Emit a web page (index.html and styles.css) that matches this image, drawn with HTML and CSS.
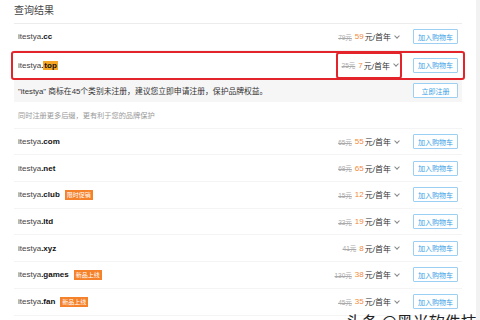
FILE: index.html
```html
<!DOCTYPE html>
<html lang="zh-CN">
  <head>
    <meta charset="UTF-8" />
    <title>查询结果</title>
    <link rel="stylesheet" href="styles.css">
  </head>
  <body>
    <div class="panel">
      <h3 class="title">查询结果</h3>

      <div class="row">
        <span class="domain">itestya<b>.cc</b></span>
        <span class="price"><s>79元</s> <em>59</em>元/首年 <i class="chev"></i></span>
        <button class="btn">加入购物车</button>
      </div>

      <div class="row active">
        <span class="domain">itestya<b>.<mark>top</mark></b></span>
        <span class="price boxed"><s>25元</s> <em>7</em>元/首年 <i class="chev"></i></span>
        <button class="btn">加入购物车</button>
      </div>

      <div class="notice">
        <span>"itestya" 商标在45个类别未注册，建议您立即申请注册，保护品牌权益。</span>
        <button class="btn">立即注册</button>
      </div>

      <p class="hint">同时注册更多后缀，更有利于您的品牌保护</p>

      <div class="row">
        <span class="domain">itestya<b>.com</b></span>
        <span class="price"><s>65元</s> <em>55</em>元/首年 <i class="chev"></i></span>
        <button class="btn">加入购物车</button>
      </div>
      <div class="row">
        <span class="domain">itestya<b>.net</b></span>
        <span class="price"><s>68元</s> <em>65</em>元/首年 <i class="chev"></i></span>
        <button class="btn">加入购物车</button>
      </div>
      <div class="row">
        <span class="domain">itestya<b>.club</b><span class="tag">限时促销</span></span>
        <span class="price"><s>15元</s> <em>12</em>元/首年 <i class="chev"></i></span>
        <button class="btn">加入购物车</button>
      </div>
      <div class="row">
        <span class="domain">itestya<b>.ltd</b></span>
        <span class="price"><s>33元</s> <em>19</em>元/首年 <i class="chev"></i></span>
        <button class="btn">加入购物车</button>
      </div>
      <div class="row">
        <span class="domain">itestya<b>.xyz</b></span>
        <span class="price"><s>41元</s> <em>8</em>元/首年 <i class="chev"></i></span>
        <button class="btn">加入购物车</button>
      </div>
      <div class="row">
        <span class="domain">itestya<b>.games</b><span class="tag">新品上线</span></span>
        <span class="price"><s>130元</s> <em>38</em>元/首年 <i class="chev"></i></span>
        <button class="btn">加入购物车</button>
      </div>
      <div class="row">
        <span class="domain">itestya<b>.fan</b><span class="tag">新品上线</span></span>
        <span class="price"><s>45元</s> <em>35</em>元/首年 <i class="chev"></i></span>
        <button class="btn">加入购物车</button>
      </div>
    </div>
    <div class="mark">头条 @黑米软件技术站</div>
  </body>
</html>
```

FILE: styles.css
```css
html, body {
  margin: 0;
  height: 320px;
  overflow: hidden;
}

body {
  position: relative;
  background: #fff;
  font-family: "Liberation Sans", "Noto Sans CJK SC", sans-serif;
  color: #333;
  border-right: 4px solid #f2f2f2;
  box-sizing: border-box;
}

.panel {
  width: 448px;
  margin-left: 14px;
}

.title {
  margin: 0;
  padding: 2px 0 0;
  height: 21px;
  font-size: 10px;
  font-weight: normal;
  color: #444;
  border-bottom: 1px solid #ececec;
}

.row {
  display: flex;
  align-items: center;
  height: 25.7px;
  padding: 0 4px;
  border-bottom: 1px solid #f4f4f4;
  font-size: 8px;
}

.row.active {
  height: 25px;
  margin: 0 -3px;
  padding: 0 5px 0 5px;
  border: 2px solid #e3242b;
  border-radius: 3px;
}

.domain {
  flex: 1;
  display: flex;
  align-items: center;
  color: #444;
}

.domain b {
  color: #111;
}

mark {
  background: #f6a623;
  color: #111;
  padding: 0 1px;
}

.tag {
  margin-left: 5px;
  padding: 1px 2px;
  background: #f5822a;
  color: #fff;
  font-size: 6px;
  line-height: 8px;
}

.price {
  display: flex;
  align-items: center;
  gap: 1px;
  margin-right: 14px;
  font-size: 8px;
  color: #333;
  white-space: nowrap;
}

.price s {
  color: #aaa;
  font-size: 6.5px;
  margin-right: 2px;
}

.price em {
  font-style: normal;
  color: #f08a3c;
}

.price.boxed {
  margin-right: 11px;
  padding: 4px 2px 4px 4px;
  border: 2px solid #e3242b;
  border-radius: 3px;
  height: 15px;
}

.chev {
  width: 3px;
  height: 3px;
  margin: 0 0 2px 3px;
  border-right: 1px solid #888;
  border-bottom: 1px solid #888;
  transform: rotate(45deg);
}

.btn {
  width: 45px;
  height: 15px;
  padding: 0;
  border: 1px solid #9ccff2;
  border-radius: 1px;
  background: #fff;
  color: #3a9fe6;
  font-family: "Noto Sans CJK SC", sans-serif;
  font-size: 7px;
}

.notice {
  display: flex;
  align-items: center;
  justify-content: space-between;
  height: 22px;
  padding: 0 4px;
  background: #f6f6f6;
  font-size: 7.8px;
  color: #333;
}

.hint {
  margin: 0;
  padding: 0 4px;
  height: 26px;
  line-height: 27px;
  font-size: 7.2px;
  color: #999;
  border-bottom: 1px solid #f4f4f4;
}

.mark {
  position: absolute;
  left: 346px;
  top: 309px;
  font-family: "Noto Sans CJK SC", sans-serif;
  font-size: 16px;
  color: #222;
  white-space: nowrap;
}
```
